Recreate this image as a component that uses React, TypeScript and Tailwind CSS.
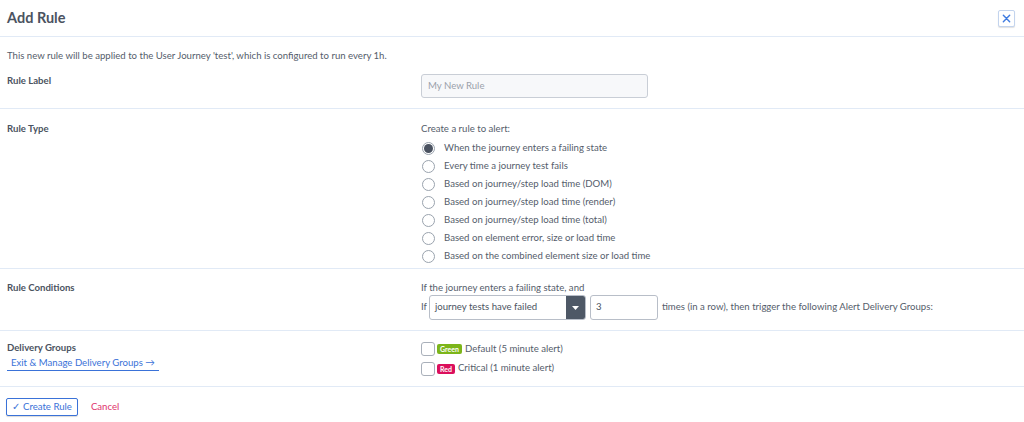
import { useState } from "react";

const ruleTypes = [
    "When the journey enters a failing state",
    "Every time a journey test fails",
    "Based on journey/step load time (DOM)",
    "Based on journey/step load time (render)",
    "Based on journey/step load time (total)",
    "Based on element error, size or load time",
    "Based on the combined element size or load time",
];

function Radio({ checked }: { checked: boolean }) {
    return (
        <span className="flex h-[13px] w-[13px] items-center justify-center rounded-full border border-[#9aa3ae] bg-white">
            {checked && <span className="h-[9px] w-[9px] rounded-full bg-[#4a5260]" />}
        </span>
    );
}

function Checkbox() {
    return <span className="h-[14px] w-[14px] rounded-[3px] border border-[#a9b0ba] bg-white" />;
}

export default function App() {
    const [selected] = useState(0);

    return (
        <div className="h-[422px] w-[1024px] overflow-hidden bg-white font-['Lato',sans-serif] text-[9.6px] text-[#555d6b]">
            {/* header */}
            <div className="flex h-[37px] items-center justify-between border-b border-[#e1eaf6] pl-[7px] pr-[9px]">
                <h1 className="text-[14.5px] font-bold text-[#4b5361]">Add Rule</h1>
                <button className="flex h-[17px] w-[17px] items-center justify-center rounded-[2px] border border-[#c3d4ee] bg-white shadow-[0_1px_1px_rgba(0,0,0,0.12)]">
                    <svg width="9" height="9" viewBox="0 0 10 10" fill="none" stroke="#3f7be0" strokeWidth="1.6" strokeLinecap="round">
                        <path d="M1.5 1.5l7 7M8.5 1.5l-7 7" />
                    </svg>
                </button>
            </div>

            <p className="pl-[7px] pt-[13px] leading-[12px]">
                This new rule will be applied to the User Journey 'test', which is configured to run every 1h.
            </p>

            {/* rule label */}
            <div className="grid h-[47px] grid-cols-[414px_1fr] border-b border-[#e1eaf6] pl-[7px]">
                <div className="pt-[13px] font-bold leading-[12px] text-[#4b5361]">Rule Label</div>
                <div className="pt-[12px]">
                    <div className="flex h-[24px] w-[227px] items-center rounded-[3px] border border-[#c9ced6] bg-[#f7f8fa] px-[6px] text-[#9aa1ab]">
                        My New Rule
                    </div>
                </div>
            </div>

            {/* rule type */}
            <div className="grid h-[160px] grid-cols-[414px_1fr] border-b border-[#e1eaf6] pl-[7px] pt-[14px]">
                <div className="font-bold leading-[12px] text-[#4b5361]">Rule Type</div>
                <div className="flex flex-col">
                    <div className="leading-[12px]">Create a rule to alert:</div>
                    <div className="mt-[4px] flex flex-col">
                        {ruleTypes.map((t, i) => (
                            <label key={t} className="flex h-[18px] items-center gap-[9px] pl-[1px]">
                                <Radio checked={i === selected} />
                                <span>{t}</span>
                            </label>
                        ))}
                    </div>
                </div>
            </div>

            {/* rule conditions */}
            <div className="grid h-[62px] grid-cols-[414px_1fr] border-b border-[#e1eaf6] pl-[7px] pt-[13px]">
                <div className="font-bold leading-[12px] text-[#4b5361]">Rule Conditions</div>
                <div className="flex flex-col">
                    <div className="leading-[12px]">If the journey enters a failing state, and</div>
                    <div className="mt-[1px] flex items-center">
                        <span className="mr-[2px]">If</span>
                        <div className="flex h-[25px] w-[157px] overflow-hidden rounded-[3px] border border-[#b8bec8] bg-white">
                            <span className="flex flex-1 items-center pl-[5px] text-[#4b5361]">journey tests have failed</span>
                            <span className="flex w-[19px] items-center justify-center bg-[#4e5866]">
                                <svg width="7" height="4" viewBox="0 0 7 4">
                                    <path d="M0 0h7L3.5 4z" fill="#fff" />
                                </svg>
                            </span>
                        </div>
                        <div className="ml-[4px] flex h-[25px] w-[68px] items-center rounded-[3px] border border-[#b8bec8] bg-white pl-[5px] text-[#4b5361]">
                            3
                        </div>
                        <span className="ml-[4px]">times (in a row), then trigger the following Alert Delivery Groups:</span>
                    </div>
                </div>
            </div>

            {/* delivery groups */}
            <div className="grid h-[56px] grid-cols-[414px_1fr] border-b border-[#e1eaf6] pl-[7px] pt-[11px]">
                <div className="flex flex-col items-start">
                    <span className="font-bold leading-[12px] text-[#4b5361]">Delivery Groups</span>
                    <a className="mt-[2px] border-b border-[#3a72d8] px-[4px] pb-[1px] leading-[13px] text-[#3a72d8]">
                        Exit &amp; Manage Delivery Groups →
                    </a>
                </div>
                <div className="flex flex-col gap-[5px]">
                    <label className="flex items-center gap-[2px]">
                        <Checkbox />
                        <span className="rounded-[2px] bg-[#7cb51a] px-[3px] text-[7px] font-bold leading-[10px] text-white">Green</span>
                        <span className="ml-[1px]">Default (5 minute alert)</span>
                    </label>
                    <label className="flex items-center gap-[2px]">
                        <Checkbox />
                        <span className="rounded-[2px] bg-[#db0f5c] px-[3px] text-[7px] font-bold leading-[10px] text-white">Red</span>
                        <span className="ml-[1px]">Critical (1 minute alert)</span>
                    </label>
                </div>
            </div>

            {/* footer */}
            <div className="flex items-center gap-[13px] pl-[6px] pt-[11px]">
                <button className="flex h-[18px] items-center gap-[3px] rounded-[2px] border border-[#3a72d8] bg-white px-[5px] text-[#3a72d8] shadow-[0_1px_1px_rgba(0,0,0,0.15)]">
                    <span>✓</span>
                    <span>Create Rule</span>
                </button>
                <button className="text-[#e0336d]">Cancel</button>
            </div>
        </div>
    );
}
